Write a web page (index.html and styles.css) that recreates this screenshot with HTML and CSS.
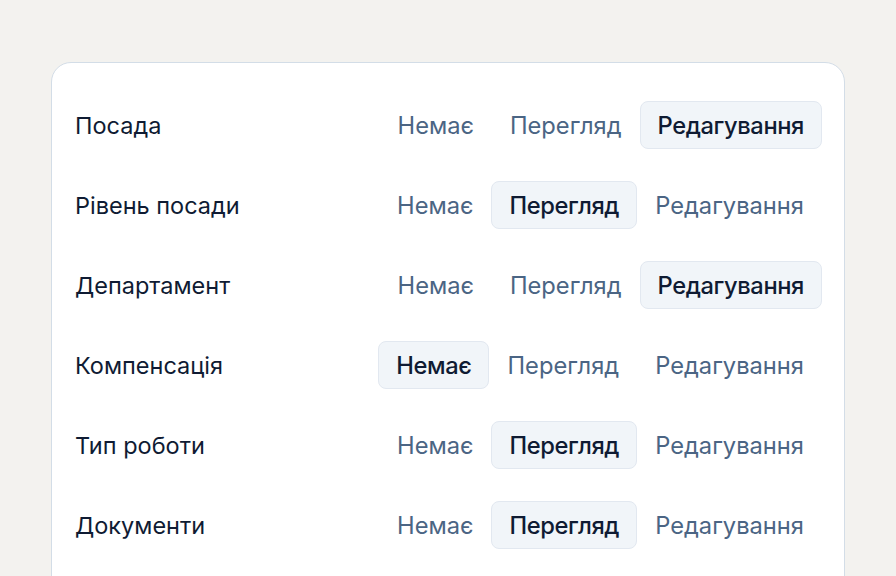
FILE: index.html
```html
<!DOCTYPE html>
<html lang="uk">
<head>
<meta charset="utf-8">
<link rel="stylesheet" href="styles.css">
</head>
<body>
<div class="card">
  <div class="row"><span class="label">Посада</span><div class="opts"><span class="opt">Немає</span><span class="opt">Перегляд</span><span class="opt sel">Редагування</span></div></div>
  <div class="row"><span class="label">Рівень посади</span><div class="opts"><span class="opt">Немає</span><span class="opt sel">Перегляд</span><span class="opt">Редагування</span></div></div>
  <div class="row"><span class="label">Департамент</span><div class="opts"><span class="opt">Немає</span><span class="opt">Перегляд</span><span class="opt sel">Редагування</span></div></div>
  <div class="row"><span class="label">Компенсація</span><div class="opts"><span class="opt sel">Немає</span><span class="opt">Перегляд</span><span class="opt">Редагування</span></div></div>
  <div class="row"><span class="label">Тип роботи</span><div class="opts"><span class="opt">Немає</span><span class="opt sel">Перегляд</span><span class="opt">Редагування</span></div></div>
  <div class="row"><span class="label">Документи</span><div class="opts"><span class="opt">Немає</span><span class="opt sel">Перегляд</span><span class="opt">Редагування</span></div></div>
</div>
</body>
</html>
```
FILE: styles.css
```css
html, body {
  margin: 0;
  padding: 0;
  height: 100%;
  overflow: hidden;
}
body {
  background: #f3f2ef;
  font-family: Inter, "Noto Sans", sans-serif;
  padding: 62px 51px 0 51px;
  box-sizing: border-box;
}
.card {
  background: #ffffff;
  border: 1.5px solid #d3dde7;
  border-radius: 20px;
  padding: 22px 22px 0 23px;
  box-sizing: border-box;
  height: 600px;
}
.row {
  display: flex;
  align-items: center;
  justify-content: space-between;
  height: 80px;
}
.label {
  font-size: 23.5px;
  color: #0f1b33;
}
.opts {
  display: flex;
  align-items: center;
}
.opt {
  font-size: 23.7px;
  color: #4b6584;
  height: 48px;
  display: flex;
  align-items: center;
  padding: 0 17px;
  box-sizing: border-box;
  border: 1px solid transparent;
  border-radius: 8px;
}
.opt.sel {
  background: #f1f5f9;
  border-color: #e2e8f0;
  color: #0f1b33;
  font-weight: 500;
  letter-spacing: -0.4px;
}
```
